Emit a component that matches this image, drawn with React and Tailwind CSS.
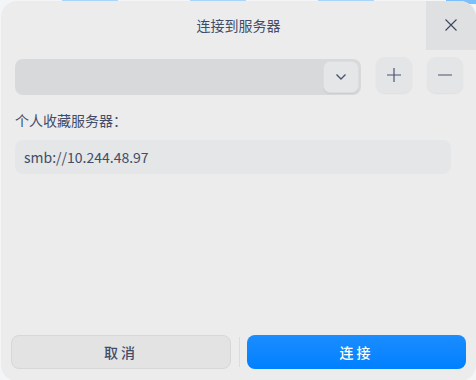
import React from 'react';

const font = { fontFamily: '"Noto Sans CJK SC", "Noto Sans", sans-serif' };

function Chevron() {
  return (
    <svg width="12" height="8" viewBox="0 0 12 8" fill="none">
      <path d="M1.5 1.5 L6 6 L10.5 1.5" stroke="#4a5470" strokeWidth="1.4" />
    </svg>
  );
}

function Plus() {
  return (
    <svg width="14" height="14" viewBox="0 0 14 14" fill="none">
      <path d="M7 0 V14 M0 7 H14" stroke="#4a5470" strokeWidth="1.2" />
    </svg>
  );
}

function Minus() {
  return (
    <svg width="14" height="14" viewBox="0 0 14 14" fill="none">
      <path d="M0 7 H14" stroke="#4a5470" strokeWidth="1.2" />
    </svg>
  );
}

function Close() {
  return (
    <svg width="12" height="12" viewBox="0 0 12 12" fill="none">
      <path d="M0.5 0.5 L11.5 11.5 M11.5 0.5 L0.5 11.5" stroke="#3c4660" strokeWidth="1.1" />
    </svg>
  );
}

export default function App() {
  return (
    <div className="relative w-[476px] h-[380px] bg-[#f4f5f6] overflow-hidden" style={font}>
      {/* window behind the dialog */}
      <div className="absolute top-0 left-[62px] w-[56px] h-[2px] bg-[#a9d4fb]" />
      <div className="absolute top-0 left-[190px] w-[56px] h-[2px] bg-[#a9d4fb]" />
      <div className="absolute top-0 left-[318px] w-[56px] h-[2px] bg-[#a9d4fb]" />
      <div className="absolute top-0 left-[446px] w-[30px] h-[4px] bg-[#7cc0fb]" />

      <div className="relative flex flex-col w-[475px] h-[380px] ml-px mt-px bg-[#ececed] rounded-[16px] overflow-hidden">
        {/* title bar */}
        <div className="relative h-[50px] flex items-center justify-center">
          <span className="text-[14px] text-[#414d68] pb-[2px]">连接到服务器</span>
          <button className="absolute top-[-1px] right-0 w-[50px] h-[50px] flex items-center justify-center bg-[#dfe0e2]">
            <Close />
          </button>
        </div>

        {/* server picker */}
        <div className="flex items-start gap-[15px] pl-[14px] pr-[13px] mt-[6px]">
          <div className="flex-1 h-[36px] mt-[2px] flex justify-end items-center pr-[2px] rounded-[8px] bg-[#d8d9da]">
            <div className="w-[36px] h-[32px] flex items-center justify-center rounded-[7px] bg-[#e5e6e7] border border-[#dcdddf] shadow-[0_1px_1px_rgba(0,0,0,0.06)]">
              <Chevron />
            </div>
          </div>
          <button className="w-[36px] h-[36px] flex items-center justify-center rounded-[9px] bg-[#e4e5e6] shadow-[0_1px_2px_rgba(0,0,0,0.06)]">
            <Plus />
          </button>
          <button className="w-[36px] h-[36px] flex items-center justify-center rounded-[9px] bg-[#e4e5e6] shadow-[0_1px_2px_rgba(0,0,0,0.06)]">
            <Minus />
          </button>
        </div>

        {/* favourites */}
        <div className="pl-[14px] mt-[15px] text-[14px] leading-[20px] text-[#414d68]">个人收藏服务器：</div>
        <div className="ml-[14px] mr-[25px] mt-[10px] h-[34px] flex items-center px-[9px] rounded-[8px] bg-[#e5e6e7] text-[14px] text-[#414d68]">
          smb://10.244.48.97
        </div>

        {/* footer */}
        <div className="mt-auto mb-[12px] flex items-center px-[10px]">
          <button className="w-[220px] h-[34px] flex items-center justify-center rounded-[8px] bg-[#e3e3e4] border border-[#d6d7d8] text-[14px] font-medium text-[#414d68] tracking-[3px]">
            取消
          </button>
          <div className="flex-1 flex justify-center">
            <div className="w-px h-[30px] bg-[#dcdcdd]" />
          </div>
          <button className="w-[219px] h-[34px] flex items-center justify-center rounded-[8px] bg-gradient-to-b from-[#1a8dff] to-[#0080ff] text-[14px] font-medium text-white tracking-[3px]">
            连接
          </button>
        </div>
      </div>
    </div>
  );
}
